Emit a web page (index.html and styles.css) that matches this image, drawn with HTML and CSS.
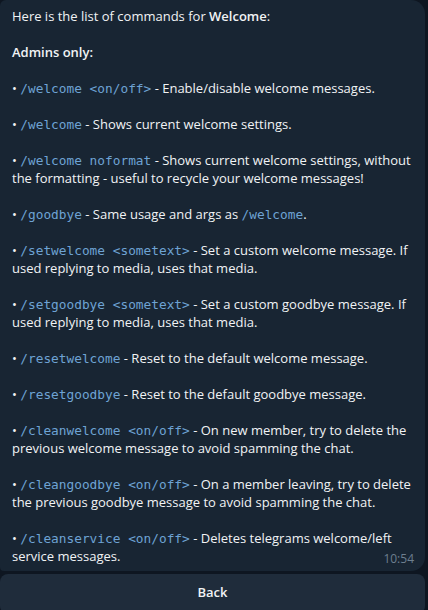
FILE: index.html
```html
<!DOCTYPE html>
<html>
<head>
<meta charset="utf-8">
<link rel="stylesheet" href="styles.css">
</head>
<body>
<div class="chat">
  <div class="bubble">
    <p>Here is the list of commands for <b>Welcome</b>:</p>
    <p><b>Admins only:</b></p>
    <p>• <code>/welcome &lt;on/off&gt;</code> - Enable/disable welcome messages.</p>
    <p>• <code>/welcome</code> - Shows current welcome settings.</p>
    <p>• <code>/welcome noformat</code> - Shows current welcome settings, without the formatting - useful to recycle your welcome messages!</p>
    <p>• <code>/goodbye</code> - Same usage and args as <code>/welcome</code>.</p>
    <p>• <code>/setwelcome &lt;sometext&gt;</code> - Set a custom welcome message. If used replying to media, uses that media.</p>
    <p>• <code>/setgoodbye &lt;sometext&gt;</code> - Set a custom goodbye message. If used replying to media, uses that media.</p>
    <p>• <code>/resetwelcome</code> - Reset to the default welcome message.</p>
    <p>• <code>/resetgoodbye</code> - Reset to the default goodbye message.</p>
    <p>• <code>/cleanwelcome &lt;on/off&gt;</code> - On new member, try to delete the previous welcome message to avoid spamming the chat.</p>
    <p>• <code>/cleangoodbye &lt;on/off&gt;</code> - On a member leaving, try to delete the previous goodbye message to avoid spamming the chat.</p>
    <p>• <code>/cleanservice &lt;on/off&gt;</code> - Deletes telegrams welcome/left service messages.</p>
    <span class="time">10:54</span>
  </div>
  <div class="keyboard">
    <button class="kbtn">Back</button>
  </div>
</div>
</body>
</html>
```
FILE: styles.css
```css
html, body {
  margin: 0;
  padding: 0;
  background: #0e1621;
  height: 100%;
  overflow: hidden;
}
.chat {
  width: 425px;
  display: flex;
  flex-direction: column;
  gap: 3px;
}
.bubble {
  position: relative;
  background: #182533;
  border-radius: 6px 14px 14px 4px;
  padding: 7px 12px 6px 12px;
  font-family: "Open Sans", sans-serif;
  font-size: 13px;
  line-height: 18px;
  color: #f1f3f5;
}
.bubble p {
  margin: 0 0 18px 0;
}
.bubble p:last-of-type {
  margin-bottom: 0;
}
.bubble b {
  font-weight: 600;
}
code {
  font-family: "DejaVu Sans Mono", monospace;
  font-size: 12.8px;
  line-height: 0;
  color: #6ea3d4;
}
.time {
  position: absolute;
  right: 11px;
  bottom: 3px;
  font-size: 12px;
  color: #6d7f8f;
}
.keyboard {
  display: flex;
}
.kbtn {
  flex: 1;
  height: 40px;
  border: none;
  border-radius: 8px;
  background: #1f2c3b;
  color: #f1f3f5;
  font-family: "Open Sans", sans-serif;
  font-weight: 600;
  font-size: 13px;
  padding: 0 0 4px 0;
}
```
